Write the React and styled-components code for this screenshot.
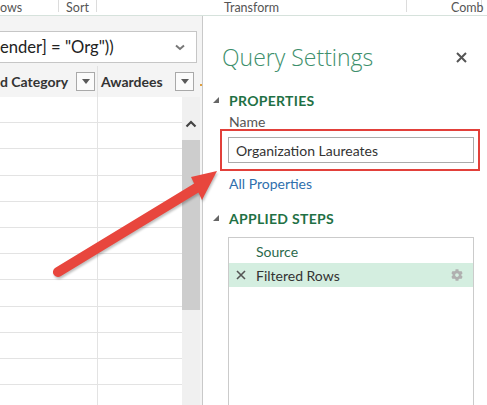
import React from 'react'
import styled, { createGlobalStyle } from 'styled-components'
import { FaCog } from 'react-icons/fa'

const GlobalStyle = createGlobalStyle`
  * {
    margin: 0;
    padding: 0;
    box-sizing: border-box;
  }
  body {
    width: 487px;
    height: 405px;
    overflow: hidden;
    background: #fff;
    font-family: Lato, "Open Sans", sans-serif;
    color: #333;
  }
`

const Page = styled.div`
  position: relative;
  width: 487px;
  height: 405px;
  display: flex;
  flex-direction: column;
  overflow: hidden;
`

// bandeau du ruban en haut
const Ribbon = styled.div`
  height: 16px;
  display: flex;
  border-bottom: 1px solid #d6e2dc;
  font-size: 12.5px;
  color: #555;
`
const RibbonGroup = styled.div`
  width: ${p => p.w}px;
  flex: none;
  display: flex;
  justify-content: ${p => p.align || 'center'};
  padding-left: ${p => p.pl || 0}px;
  line-height: 15px;
  border-right: 1px solid #dcdcdc;
  height: 12px;
  white-space: nowrap;
`

const Main = styled.div`
  flex: 1;
  display: flex;
  min-height: 0;
`

const LeftPane = styled.div`
  width: 203px;
  flex: none;
  border-right: 1px solid #c9c9c9;
  display: flex;
  flex-direction: column;
  padding-top: 15px;
  background: #f4f4f4;
`
const FormulaBox = styled.div`
  width: 197px;
  height: 32px;
  background: #fff;
  border: 1px solid #c6c6c6;
  border-left: none;
  display: flex;
  align-items: center;
  justify-content: space-between;
  padding-right: 11px;
  font-size: 16.6px;
  color: #222;
  white-space: nowrap;
`
const HeaderRow = styled.div`
  height: 34px;
  display: flex;
  align-items: center;
  padding-top: 3px;
  background: #f4f4f4;
`
const HeadCell = styled.div`
  width: ${p => p.w}px;
  flex: none;
  display: flex;
  align-items: center;
  padding-left: ${p => p.pl || 0}px;
  padding-right: 2px;
  font-weight: 700;
  font-size: 14px;
  color: #333;
  white-space: nowrap;
  align-self: stretch;
  border-right: ${p => (p.line ? '1px solid #e2e2e2' : 'none')};
`
const FilterButton = styled.div`
  margin-left: auto;
  width: 19px;
  height: 19px;
  border: 1px solid #a9a9a9;
  background: #fbfbfb;
  display: flex;
  align-items: center;
  justify-content: center;
  &::after {
    content: '';
    border-left: 4px solid transparent;
    border-right: 4px solid transparent;
    border-top: 5px solid #5a5a5a;
  }
`
const TypeDot = styled.div`
  width: 2px;
  height: 2px;
  margin: 6px 0 0 4px;
  background: #e0a040;
`
const GridBody = styled.div`
  flex: 1;
  display: flex;
  min-height: 0;
`
const Rows = styled.div`
  width: 182px;
  flex: none;
  background: #fff;
`
const Row = styled.div`
  height: 26.2px;
  display: flex;
  border-bottom: 1px solid #e3e3e3;
`
const Cell = styled.div`
  width: ${p => p.w}px;
  flex: ${p => (p.w ? 'none' : 1)};
  border-right: ${p => (p.line ? '1px solid #e3e3e3' : 'none')};
`
const ScrollBar = styled.div`
  width: 18px;
  flex: none;
  background: #f0f0f0;
  display: flex;
  flex-direction: column;
  align-items: center;
`
const ScrollArrow = styled.div`
  height: 43px;
  padding-top: 23px;
  display: flex;
  justify-content: center;
`
const ScrollThumb = styled.div`
  width: 18px;
  height: 170px;
  background: #cdcdcd;
`

// panneau de droite
const RightPane = styled.div`
  flex: 1;
  display: flex;
  flex-direction: column;
  padding-top: 25px;
`
const TitleRow = styled.div`
  display: flex;
  align-items: center;
  justify-content: space-between;
  padding: 0 20px 0 19px;
  height: 32px;
`
const Title = styled.h1`
  font-family: "Open Sans", Lato, sans-serif;
  font-size: 23px;
  font-weight: 300;
  color: #3d8f6c;
  line-height: 32px;
`
const SectionHead = styled.div`
  display: flex;
  align-items: center;
  height: 20px;
  margin-top: ${p => p.mt}px;
  padding-left: 10px;
  font-size: 14px;
  font-weight: 700;
  color: #1f7145;
  letter-spacing: 0.3px;
`
const Caret = styled.span`
  width: 16px;
  display: flex;
`
const Label = styled.div`
  padding-left: 26px;
  font-size: 14px;
  line-height: 16px;
  color: #555;
  margin-top: 4px;
  height: 9px;
`
const Highlight = styled.div`
  margin: 6px 7px 0 17px;
  border: 2px solid #e2403a;
  padding: 6px 4px 6px 6px;
`
const NameInput = styled.div`
  height: 26px;
  border: 1px solid #ababab;
  display: flex;
  align-items: center;
  padding-left: 7px;
  font-size: 14px;
  color: #333;
`
const Link = styled.div`
  padding-left: 26px;
  margin-top: 5px;
  font-size: 14px;
  line-height: 16px;
  color: #2f6fad;
`
const StepsBox = styled.div`
  flex: 1;
  margin: 9px 13px 0 25px;
  border: 1px solid #cbcbcb;
  border-bottom: none;
  padding-top: 1px;
`
const Step = styled.div`
  height: 24px;
  display: flex;
  align-items: center;
  padding: 0 10px 0 7px;
  font-size: 14px;
  color: ${p => (p.active ? '#333' : '#2b6a4c')};
  background: ${p => (p.active ? '#d4eee0' : 'transparent')};
`
const StepIcon = styled.span`
  width: 20px;
  display: flex;
`
const Gear = styled(FaCog)`
  margin-left: auto;
  color: #b0b0b0;
  width: 12px;
  height: 12px;
`
const ArrowLayer = styled.svg`
  position: absolute;
  left: 0;
  top: 0;
  pointer-events: none;
  filter: drop-shadow(1px 2px 1px rgba(0, 0, 0, 0.25));
`

const rows = Array.from({ length: 12 })

export default function App() {
  return (
    <Page>
      <GlobalStyle />
      <Ribbon>
        <RibbonGroup w={59} align="flex-start">ows</RibbonGroup>
        <RibbonGroup w={38}>Sort</RibbonGroup>
        <RibbonGroup w={310}>Transform</RibbonGroup>
        <RibbonGroup w={75} align="flex-start" pl={44}>Comb</RibbonGroup>
      </Ribbon>
      <Main>
        <LeftPane>
          <FormulaBox>
            <span>ender] = "Org"))</span>
            <svg width="10" height="7" viewBox="0 0 10 7">
              <path d="M1 1.5 L5 5 L9 1.5" fill="none" stroke="#777" strokeWidth="2" />
            </svg>
          </FormulaBox>
          <HeaderRow>
            <HeadCell w={98} line>
              d Category
              <FilterButton />
            </HeadCell>
            <HeadCell w={98} pl={3}>
              Awardees
              <FilterButton />
            </HeadCell>
            <TypeDot />
          </HeaderRow>
          <GridBody>
            <Rows>
              {rows.map((_, i) => (
                <Row key={i}>
                  <Cell w={98} line />
                  <Cell />
                </Row>
              ))}
            </Rows>
            <ScrollBar>
              <ScrollArrow>
                <svg width="12" height="8" viewBox="0 0 12 8">
                  <path d="M1.5 6.5 L6 2 L10.5 6.5" fill="none" stroke="#444" strokeWidth="2.2" />
                </svg>
              </ScrollArrow>
              <ScrollThumb />
            </ScrollBar>
          </GridBody>
        </LeftPane>
        <RightPane>
          <TitleRow>
            <Title>Query Settings</Title>
            <svg width="11" height="11" viewBox="0 0 11 11">
              <path d="M1 1 L10 10 M10 1 L1 10" stroke="#555" strokeWidth="2" />
            </svg>
          </TitleRow>
          <SectionHead mt={17}>
            <Caret>
              <svg width="6" height="6" viewBox="0 0 6 6">
                <polygon points="6,0 6,6 0,6" fill="#666" />
              </svg>
            </Caret>
            PROPERTIES
          </SectionHead>
          <Label>Name</Label>
          <Highlight>
            <NameInput>Organization Laureates</NameInput>
          </Highlight>
          <Link>All Properties</Link>
          <SectionHead mt={16}>
            <Caret>
              <svg width="6" height="6" viewBox="0 0 6 6">
                <polygon points="6,0 6,6 0,6" fill="#666" />
              </svg>
            </Caret>
            APPLIED STEPS
          </SectionHead>
          <StepsBox>
            <Step>
              <StepIcon />
              Source
            </Step>
            <Step active>
              <StepIcon>
                <svg width="10" height="10" viewBox="0 0 10 10">
                  <path d="M1 1 L9 9 M9 1 L1 9" stroke="#555" strokeWidth="1.6" />
                </svg>
              </StepIcon>
              Filtered Rows
              <Gear />
            </Step>
          </StepsBox>
        </RightPane>
      </Main>
      <ArrowLayer width="487" height="405" viewBox="0 0 487 405">
        <line x1="58" y1="272" x2="198" y2="187" stroke="#e8463d" strokeWidth="10" strokeLinecap="round" />
        <polygon points="217,171 191,177 202,200" fill="#e8463d" />
      </ArrowLayer>
    </Page>
  )
}
